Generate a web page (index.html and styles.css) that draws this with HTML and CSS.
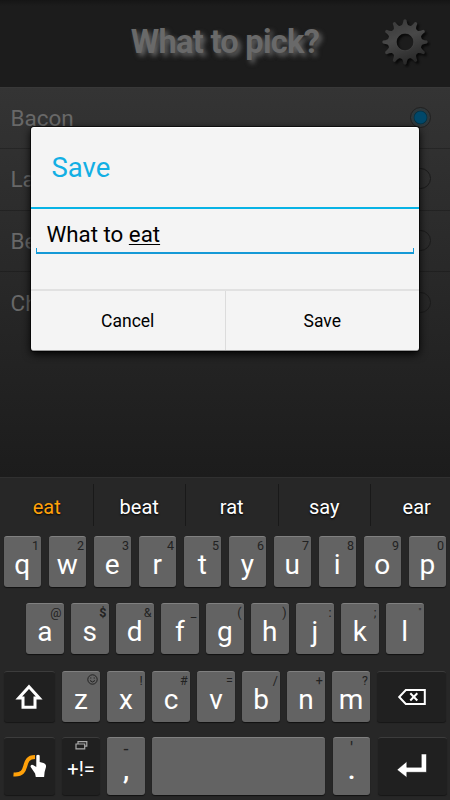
FILE: index.html
```html
<!DOCTYPE html>
<html lang="en">
<head>
<meta charset="utf-8">
<title>What to pick?</title>
<link rel="stylesheet" href="styles.css">
</head>
<body>
<div class="screen">
  <header class="topbar">
    <h1 class="app-title">What to pick?</h1>
    <svg class="gear" viewBox="-26 -26 52 52">
      <defs>
        <linearGradient id="metal" gradientUnits="userSpaceOnUse" x1="-8" y1="-22" x2="8" y2="22">
          <stop offset="0" stop-color="#3b3b3b"/><stop offset=".4" stop-color="#484848"/><stop offset="1" stop-color="#262626"/>
        </linearGradient>
        <mask id="cut" maskUnits="userSpaceOnUse" x="-26" y="-26" width="52" height="52">
          <g fill="#fff">
            <circle r="17"/>
            <g id="pair"><path id="tooth" d="M-4.8-15Q-2-17-1.5-22Q0-23.6 1.5-22Q2-17 4.8-15Z"/><use href="#tooth" transform="rotate(180)"/></g>
            <use href="#pair" transform="rotate(30)"/><use href="#pair" transform="rotate(60)"/><use href="#pair" transform="rotate(90)"/><use href="#pair" transform="rotate(120)"/><use href="#pair" transform="rotate(150)"/>
          </g>
          <circle r="8.5" fill="#000"/>
        </mask>
      </defs>
      <g class="gear-shape"><rect x="-26" y="-26" width="52" height="52" fill="url(#metal)" mask="url(#cut)"/></g>
      <circle r="8.7" fill="none" stroke="#555" stroke-width=".5" opacity=".6"/>
    </svg>
  </header>
  <main class="choices">
    <div class="choice"><span>Bacon</span><i class="radio on"></i></div>
    <div class="choice"><span>La</span><i class="radio"></i></div>
    <div class="choice"><span>Be</span><i class="radio"></i></div>
    <div class="choice last"><span>Ch</span><i class="radio"></i></div>
  </main>

  <section class="keyboard">
    <div class="suggestions">
      <span class="word active">eat</span><span class="word">beat</span><span class="word">rat</span><span class="word">say</span><span class="word">ear</span>
    </div>
    <div class="row">
      <div class="key"><sup>1</sup>q</div><div class="key"><sup>2</sup>w</div><div class="key"><sup>3</sup>e</div><div class="key"><sup>4</sup>r</div><div class="key"><sup>5</sup>t</div><div class="key"><sup>6</sup>y</div><div class="key"><sup>7</sup>u</div><div class="key"><sup>8</sup>i</div><div class="key"><sup>9</sup>o</div><div class="key"><sup>0</sup>p</div>
    </div>
    <div class="row home">
      <div class="key"><sup>@</sup>a</div><div class="key"><sup class="strong">$</sup>s</div><div class="key"><sup>&amp;</sup>d</div><div class="key"><sup>_</sup>f</div><div class="key"><sup>(</sup>g</div><div class="key"><sup>)</sup>h</div><div class="key"><sup>:</sup>j</div><div class="key"><sup>;</sup>k</div><div class="key"><sup class="quote">"</sup>l</div>
    </div>
    <div class="row">
      <div class="key dark shift">
        <svg width="28" height="26" viewBox="0 0 28 26"><path d="M14 2.8 24.2 14H20v9.3H8V14H3.8Z" fill="#222" stroke="#fff" stroke-width="3"/></svg>
      </div>
      <div class="key"><sup><svg class="smile" width="11" height="11" viewBox="0 0 11 11"><circle cx="5.5" cy="5.5" r="4.7"/><path d="M3 6.5q2.5 3 5 0M3.8 3.4v1.2M7.2 3.4v1.2"/></svg></sup>z</div><div class="key"><sup>!</sup>x</div><div class="key"><sup>#</sup>c</div><div class="key"><sup>=</sup>v</div><div class="key"><sup>/</sup>b</div><div class="key"><sup>+</sup>n</div><div class="key"><sup>?</sup>m</div>
      <div class="key dark wide">
        <svg width="30" height="18" viewBox="0 0 30 18"><path d="M8.8 2H27.8V16H8.8L2.2 9Z" fill="#181818" stroke="#fff" stroke-width="2"/><path d="M13.3 5.3l7 7.2M20.3 5.3l-7 7.2" stroke="#fff" stroke-width="2"/></svg>
      </div>
    </div>
    <div class="row bottom">
      <div class="key dark shift">
        <svg width="34" height="26" viewBox="0 0 34 26"><path d="M1.5 21.5C19 23 8 4 23 4" fill="none" stroke="#ffa10a" stroke-width="4"/><path d="M24.3 2.5q1.8-1.5 3.4 0V9l3.8 1q3 1 2.5 4l-1.4 5-.5 5H23.8l-.7-3.5-4.6-6.8q0-2.4 2.5-1.7l3.3 2Z" fill="#fff"/></svg>
      </div>
      <div class="key dark symbols">
        <svg width="13" height="9" viewBox="0 0 13 9"><path d="M3 2.8V.7H11.8V5.2H10M1 3H9.7V7.8H1Z" fill="none" stroke="#aaa" stroke-width="1.2"/></svg>
        <span>+!=</span>
      </div>
      <div class="key punct"><small class="dash">-</small><b>,</b></div>
      <div class="key space"></div>
      <div class="key punct"><small>'</small><b>.</b></div>
      <div class="key dark wide">
        <svg width="32" height="26" viewBox="0 0 32 26"><path d="M25.3 1h5.2v18.3H10.8v5.2L1 16.8 10.8 8.5v5.8H25.3Z" fill="#fff" stroke="#111" stroke-width=".5"/></svg>
      </div>
    </div>
  </section>

  <div class="dialog">
    <h2 class="dialog-title">Save</h2>
    <div class="dialog-body">
      <div class="field">What to <u>eat</u></div>
    </div>
    <div class="actions"><div class="action">Cancel</div><div class="action">Save</div></div>
  </div>
</div>
</body>
</html>
```
FILE: styles.css
```css
* { box-sizing: border-box; }
body { margin: 0; background: #1c1c1c; font-family: Roboto, "Liberation Sans", sans-serif; }
.screen { position: relative; width: 450px; height: 800px; overflow: hidden; }

.topbar {
  height: 87px;
  display: grid;
  grid-template-columns: 1fr 190px 1fr;
  align-items: start;
  justify-items: center;
  background: linear-gradient(#151515, #1c1c1c 6px, #1c1c1c);
}
.app-title {
  grid-column: 2;
  margin: 23px 0 0;
  font-size: 32.5px;
  line-height: 38px;
  font-weight: 700;
  white-space: nowrap;
  letter-spacing: -.7px;
  color: #696969;
  text-shadow: 3px 3px 5px #666;
}
.gear { width: 52px; height: 52px; margin: 16px 0 0 40px; }
.gear-shape { filter: drop-shadow(2px 2px 1px #080808); }

.choices {
  height: 390px;
  border-top: 1px solid #383838;
  background: linear-gradient(#343434, #1c1c1c);
}
.choice {
  height: 61.3px;
  padding: 0 19.5px 0 10.5px;
  display: flex;
  align-items: center;
  justify-content: space-between;
  font-size: 22.5px;
  color: #686868;
  border-bottom: 1px solid rgba(0, 0, 0, .22);
}
.choice.last { border-bottom: 0; }
.radio { width: 21px; height: 21px; margin-top: -1px; border: 1px solid #1a1a1a; border-radius: 50%; }
.radio.on {
  border-color: #202020;
  background: radial-gradient(circle, #00486a 0 5.5px, #063040 6.5px, #2c383d 7.2px, #30383b 10px);
}

.keyboard {
  height: 323px;
  border-top: 1px solid #303030;
  background: #272727;
}
.suggestions { height: 57.5px; display: flex; padding: 6px 0 0 1px; }
.word {
  flex: none;
  width: 92.5px;
  height: 42px;
  padding-top: 3px;
  line-height: 40px;
  text-align: center;
  font-size: 20px;
  color: #fff;
  border-right: 1px solid #191919;
  text-shadow: 0 1px 2px #000;
}
.word.active { color: #ffa10a; }
.row { display: flex; gap: 7.5px; height: 51px; margin: 0 3.5px 16.5px; }
.row.home { margin-left: 26px; }
.row.bottom { height: 57.5px; margin-top: -1px; }
.key {
  position: relative;
  flex: none;
  width: 37.5px;
  display: flex;
  align-items: center;
  justify-content: center;
  padding-top: 6px;
  border-radius: 3px;
  border-top: 1px solid #808080;
  background: #636363;
  box-shadow: 0 1px 1px #111;
  font-size: 28px;
  line-height: 32px;
  color: #fff;
}
.key sup {
  position: absolute;
  top: 1px;
  right: 2px;
  font-size: 12.5px;
  line-height: 15px;
  color: #222;
}
.key sup.strong { font-weight: 700; }
.key sup.quote { font-size: 9px; }
.smile { display: block; margin-top: 1px; fill: none; stroke: #222; stroke-width: 1; }
.dark { background: #202020; border-top-color: #3c3c3c; box-shadow: 0 1px 1px #171717; padding-top: 0; }
.shift { width: 51.3px; }
.wide { width: 69px; }
.space { width: 173px; }
.symbols { flex-direction: column; justify-content: flex-start; padding-top: 3px; }
.symbols span { font-size: 20px; line-height: 24px; margin-top: 7px; }
.punct { flex-direction: column; justify-content: flex-start; padding-top: 1px; }
.punct small { font-size: 18px; line-height: 20px; height: 16px; color: #222; }
.punct b { font-size: 28px; line-height: 30px; font-weight: 500; }

.dialog {
  position: absolute;
  left: 31px;
  top: 127px;
  width: 388px;
  height: 224px;
  border-radius: 3px;
  background: #f4f4f4;
  border-top: 1px solid #fff;
  border-bottom: 1px solid #999;
  box-shadow: 0 0 0 1px rgba(0, 0, 0, .6), 0 3px 8px #000;
  color: #000;
}
.dialog-title {
  height: 81px;
  margin: 0;
  padding: 0 20.5px;
  border-bottom: 2px solid #07b3e5;
  font-size: 27.5px;
  line-height: 79px;
  font-weight: 400;
  color: #12afe4;
}
.dialog-body { height: 80px; padding: 9px 5px 0; }
.field {
  position: relative;
  height: 36px;
  padding-left: 10.5px;
  font-size: 22.3px;
  line-height: 32px;
  border-bottom: 2px solid #1599d6;
}
.field u { text-decoration-thickness: 1px; text-underline-offset: 2px; }
.field::after {
  content: "";
  position: absolute;
  inset: 30px 0 0;
  border: solid #1599d6;
  border-width: 0 1px;
}
.actions { display: flex; height: 61px; border-top: 2px solid #e1e1e1; }
.action {
  flex: 1;
  text-align: center;
  font-size: 17.5px;
  line-height: 61px;
}
.action + .action { border-left: 1px solid #dcdcdc; }
```
